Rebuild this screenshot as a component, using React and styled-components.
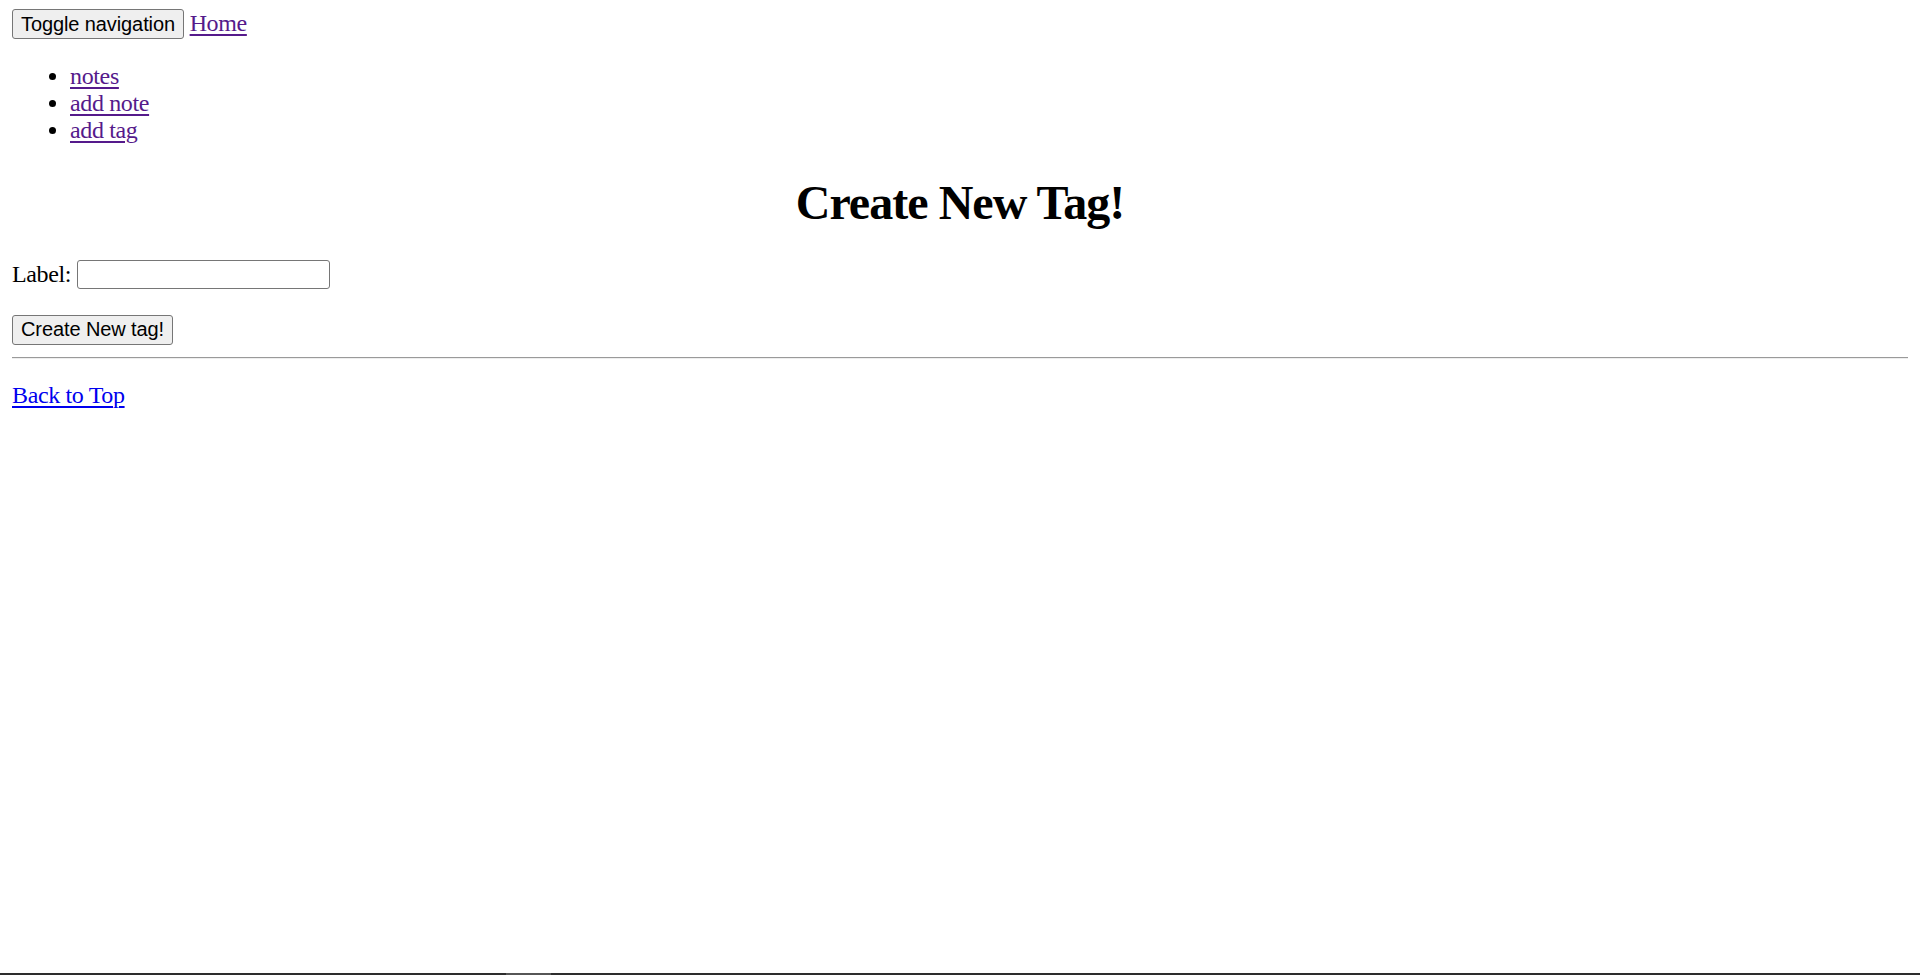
import styled, { createGlobalStyle } from 'styled-components';

const GlobalStyle = createGlobalStyle`
  html, body {
    margin: 0;
    padding: 0;
    background: #fff;
  }

  body {
    padding: 12px;
    font-family: "Liberation Serif", "Times New Roman", serif;
    font-size: 24px;
    letter-spacing: -0.015em;
    color: #000;
  }
`;

const StyledNav = styled.nav`
  line-height: 27px;
  margin-top: -3px;
`;

const StyledButton = styled.button`
  font-family: "Liberation Sans", Arial, sans-serif;
  font-size: 20px;
  letter-spacing: -0.1px;
  color: #000;
  background: #efefef;
  border: 1.5px solid #767676;
  border-radius: 3px;
  padding: 2px 8px;
  height: 30px;
  line-height: 23px;
  vertical-align: baseline;
  cursor: pointer;
`;

const StyledLink = styled.a`
  color: ${(p) => (p.$visited ? '#551a8b' : '#0000ee')};
  text-decoration: underline;
  text-decoration-thickness: 2px;
  text-underline-offset: 3px;
`;

const StyledMenu = styled.ul`
  margin: 24px 0;
  padding-left: 58px;
  line-height: 27px;
  list-style: disc;
`;

const StyledTitle = styled.h1`
  font-size: 48px;
  font-weight: bold;
  letter-spacing: -0.02em;
  text-align: center;
  margin: 31px 0;
  line-height: 55px;
`;

const StyledField = styled.div`
  display: flex;
  align-items: center;
  gap: 6px;
  line-height: 27.6px;
  margin-top: -1px;

  input {
    width: 253px;
    height: 29px;
    box-sizing: border-box;
    border: 1.5px solid #767676;
    border-radius: 3px;
    font-family: "Liberation Sans", Arial, sans-serif;
    font-size: 20px;
    padding: 1px 3px;
  }
`;

const StyledActions = styled.div`
  margin-top: 24px;
  line-height: 30px;
`;

const StyledRule = styled.hr`
  margin: 12px 0 0;
  border: none;
  border-top: 1.5px solid #9a9a9a;
  border-bottom: 1px solid #eeeeee;
`;

const StyledFooter = styled.p`
  margin: 23px 0 0;
  line-height: 27.6px;
`;

const StyledTaskStrip = styled.div`
  position: fixed;
  left: 0;
  right: 0;
  bottom: 0;
  height: 2px;
  background: #2d2d2d;

  span {
    position: absolute;
    left: 506px;
    width: 45px;
    top: 0;
    bottom: 0;
    background: #565656;
  }
`;

export default function App() {
  return (
    <>
      <GlobalStyle />
      <StyledNav>
        <StyledButton type="button">Toggle navigation</StyledButton>{' '}
        <StyledLink href="#" $visited>
          Home
        </StyledLink>
      </StyledNav>

      <StyledMenu>
        <li>
          <StyledLink href="#" $visited>
            notes
          </StyledLink>
        </li>
        <li>
          <StyledLink href="#" $visited>
            add note
          </StyledLink>
        </li>
        <li>
          <StyledLink href="#" $visited>
            add tag
          </StyledLink>
        </li>
      </StyledMenu>

      <StyledTitle>Create New Tag!</StyledTitle>

      <form onSubmit={(e) => e.preventDefault()}>
        <StyledField>
          <label htmlFor="label">Label:</label>
          <input id="label" type="text" />
        </StyledField>
        <StyledActions>
          <StyledButton type="submit">Create New tag!</StyledButton>
        </StyledActions>
      </form>

      <StyledRule />

      <StyledFooter>
        <StyledLink href="#">Back to Top</StyledLink>
      </StyledFooter>

      <StyledTaskStrip>
        <span />
      </StyledTaskStrip>
    </>
  );
}
